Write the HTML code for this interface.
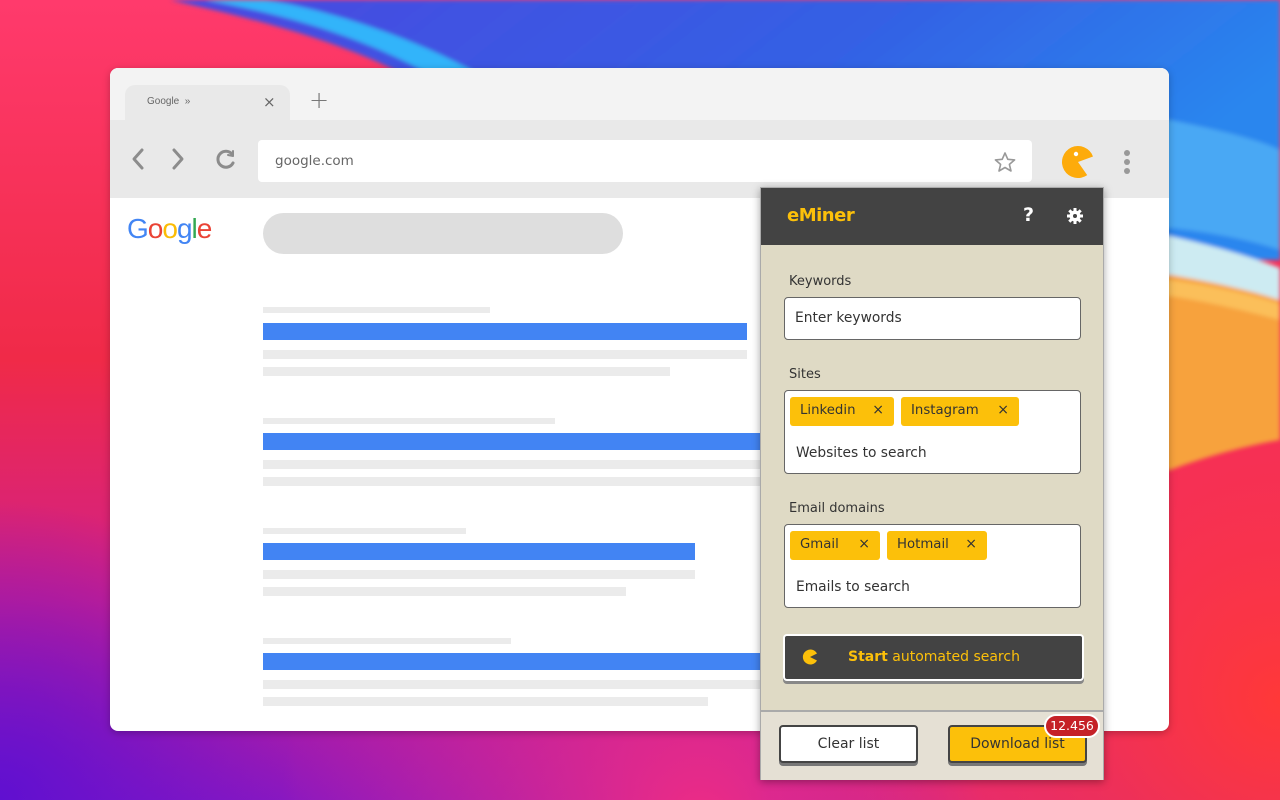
<!DOCTYPE html>
<html><head><style>
*{box-sizing:border-box;margin:0;padding:0}
body{width:1280px;height:800px;overflow:hidden;position:relative;font-family:"DejaVu Sans","Liberation Sans",sans-serif}
.bg{position:absolute;left:0;top:0}
.win{position:absolute;left:110px;top:68px;width:1059px;height:663px;border-radius:8px;background:#fff;overflow:hidden;box-shadow:0 2px 8px rgba(0,0,0,.25)}
.strip{position:absolute;left:0;top:0;width:100%;height:52px;background:#f3f3f3}
.tab{position:absolute;left:15px;top:17px;width:165px;height:36px;background:#e9e9e9;border-radius:10px 10px 0 0}
.tool{position:absolute;left:0;top:52px;width:100%;height:78px;background:#e9e9e9}
.url{position:absolute;left:148px;top:72px;width:774px;height:42px;background:#fff;border-radius:4px;font-size:13.5px;color:#666;padding:13px 17px}
.bar{position:absolute;background:#ebebeb;height:9px}
.blue{position:absolute;background:#4284f3;height:17px}
.pop{position:absolute;left:760px;top:187px;width:344px;height:593px;background:#dfdac5;border:1px solid #aaa;box-shadow:0 2px 8px rgba(0,0,0,.35)}
.hd{height:57px;background:#434343;position:relative}
.lbl{position:absolute;left:28px;font-size:13px;color:#333}
.inp{position:absolute;left:23px;width:297px;background:#fff;border:1.5px solid #666;border-radius:4px;font-size:13.8px;color:#333}
.chip{position:absolute;top:6px;height:29px;background:#fcc00a;border-radius:3px;font-size:13.3px;color:#333;padding:6px 10px}
.chip b{position:absolute;right:10px;top:5px;font-size:14px;font-weight:normal}
.ft{position:absolute;left:0;top:522px;width:100%;height:70px;background:#e5e0d4;border-top:2px solid #aaa}
.btn{position:absolute;height:38px;border:2px solid #444;border-radius:4px;font-size:14px;color:#333;text-align:center;line-height:34px;box-shadow:0 3px 0 #777}
</style></head><body>
<svg class="bg" width="1280" height="800" viewBox="0 0 1280 800">
<defs>
<linearGradient id="base" x1="0" y1="0" x2="0" y2="1">
<stop offset="0" stop-color="#ff3a6c"/><stop offset="0.45" stop-color="#f02a48"/><stop offset="0.75" stop-color="#d0208a"/><stop offset="1" stop-color="#8a18c0"/></linearGradient>
<linearGradient id="bl" x1="0" y1="0" x2="1" y2="0.3"><stop offset="0" stop-color="#4a48e0"/><stop offset="0.6" stop-color="#3460e4"/><stop offset="1" stop-color="#2a86ee"/></linearGradient>
<radialGradient id="br" cx="1280" cy="700" r="520" gradientUnits="userSpaceOnUse"><stop offset="0" stop-color="#ff3838"/><stop offset="0.6" stop-color="#f83058" stop-opacity=".8"/><stop offset="1" stop-color="#f8306a" stop-opacity="0"/></radialGradient>
<radialGradient id="bm" cx="700" cy="820" r="420" gradientUnits="userSpaceOnUse"><stop offset="0" stop-color="#ee2c84"/><stop offset="1" stop-color="#ee2c84" stop-opacity="0"/></radialGradient>
<radialGradient id="bp" cx="0" cy="800" r="300" gradientUnits="userSpaceOnUse"><stop offset="0" stop-color="#6010d0"/><stop offset="1" stop-color="#6010d0" stop-opacity="0"/></radialGradient>
<filter id="f"><feGaussianBlur stdDeviation="2"/></filter>
</defs>
<rect width="1280" height="800" fill="url(#base)"/>
<rect width="1280" height="800" fill="url(#bm)"/>
<rect width="1280" height="800" fill="url(#br)"/>
<rect width="1280" height="800" fill="url(#bp)"/>
<g filter="url(#f)">
<path d="M170,0 C260,20 360,45 430,90 L1100,90 L1100,260 L1280,260 L1280,0Z" fill="url(#bl)"/>
<path d="M205,0 C290,15 370,40 430,75 L480,75 C410,35 320,8 265,0Z" fill="#30b4fa"/>
<path d="M1100,120 L1170,120 C1220,130 1260,140 1280,150 L1280,250 C1250,240 1210,232 1170,228 L1100,228Z" fill="#4aa8f4"/>
<path d="M1100,236 L1170,236 C1215,246 1255,258 1280,268 L1280,300 C1250,292 1210,282 1170,275 L1100,275Z" fill="#cdebf2"/>
<path d="M1100,275 L1170,275 C1215,282 1255,292 1280,300 L1280,440 C1250,445 1210,455 1170,470 L1100,470Z" fill="#f7a23e"/>
<path d="M1100,280 L1170,280 C1215,286 1255,296 1280,304 L1280,320 C1250,312 1210,302 1170,296 L1100,296Z" fill="#fbbf5a"/>
</g>
</svg>
<div class="win">
 <div class="strip"></div>
 <div class="tab"><span style="position:absolute;left:22px;top:11px;font-size:10px;color:#666;font-family:'Liberation Sans',sans-serif">Google &nbsp;»</span><span style="position:absolute;left:138px;top:8px;font-size:15px;color:#666">×</span></div>
 <div style="position:absolute;left:199px;top:18px;font-size:24px;color:#777;font-weight:300">+</div>
 <div class="tool"></div>
 <svg style="position:absolute;left:16px;top:78px" width="120" height="26" viewBox="0 0 120 26" fill="none" stroke="#8c8c8c" stroke-width="3" stroke-linecap="round" stroke-linejoin="round"><path d="M16 4 L8 13 L16 22"/><path d="M48 4 L56 13 L48 22"/><path d="M106 8 A8 8 0 1 0 107 17"/><path d="M102 9 L107 10 L107 5" stroke-width="2"/></svg>
 <div class="url">google.com</div>
 <svg style="position:absolute;left:883px;top:83px" width="24" height="22" viewBox="0 0 24 22"><path d="M12 2 L14.8 8.3 L21.6 8.9 L16.4 13.4 L18 20 L12 16.5 L6 20 L7.6 13.4 L2.4 8.9 L9.2 8.3Z" fill="none" stroke="#999" stroke-width="1.6" stroke-linejoin="round"/></svg>
 <svg style="position:absolute;left:950px;top:76px" width="36" height="36" viewBox="0 0 36 36"><path d="M18 18 L33 12.5 A16 16 0 1 0 27.2 31.1 Z" fill="#fdab0b"/><circle cx="16" cy="10" r="2.2" fill="#fff"/></svg>
 <div style="position:absolute;left:1014px;top:82px;width:6px">
  <div style="width:6px;height:6px;border-radius:3px;background:#999;margin-bottom:3px"></div><div style="width:6px;height:6px;border-radius:3px;background:#999;margin-bottom:3px"></div><div style="width:6px;height:6px;border-radius:3px;background:#999"></div></div>
 <div style="position:absolute;left:17px;top:145px;font-size:28px;letter-spacing:-1px;font-family:'Liberation Sans',sans-serif"><span style="color:#4285f4">G</span><span style="color:#ea4335">o</span><span style="color:#fbbc05">o</span><span style="color:#4285f4">g</span><span style="color:#34a853">l</span><span style="color:#ea4335">e</span></div>
 <div style="position:absolute;left:153px;top:145px;width:360px;height:41px;background:#dedede;border-radius:21px"></div>
 <div class="bar" style="left:153px;top:239px;width:227px;height:6px"></div>
 <div class="blue" style="left:153px;top:255px;width:484px"></div>
 <div class="bar" style="left:153px;top:282px;width:484px"></div>
 <div class="bar" style="left:153px;top:299px;width:407px"></div>
 <div class="bar" style="left:153px;top:350px;width:292px;height:6px"></div>
 <div class="blue" style="left:153px;top:365px;width:500px"></div>
 <div class="bar" style="left:153px;top:392px;width:500px"></div>
 <div class="bar" style="left:153px;top:409px;width:500px"></div>
 <div class="bar" style="left:153px;top:460px;width:203px;height:6px"></div>
 <div class="blue" style="left:153px;top:475px;width:432px"></div>
 <div class="bar" style="left:153px;top:502px;width:432px"></div>
 <div class="bar" style="left:153px;top:519px;width:363px"></div>
 <div class="bar" style="left:153px;top:570px;width:248px;height:6px"></div>
 <div class="blue" style="left:153px;top:585px;width:500px"></div>
 <div class="bar" style="left:153px;top:612px;width:500px"></div>
 <div class="bar" style="left:153px;top:629px;width:445px"></div>
</div>
<div class="pop">
 <div class="hd">
  <span style="position:absolute;left:26px;top:17px;font-size:18px;font-weight:bold;color:#fcc00a;letter-spacing:-0.5px">eMiner</span>
  <span style="position:absolute;left:262px;top:16px;font-size:19px;font-weight:bold;color:#fff">?</span>
  <svg style="position:absolute;left:306px;top:20px" width="16" height="16" viewBox="0 0 16 16"><g stroke="#fff" stroke-width="3"><path d="M8 0V16M0 8H16M2.3 2.3L13.7 13.7M13.7 2.3L2.3 13.7"/></g><circle cx="8" cy="8" r="5.5" fill="#fff"/><circle cx="8" cy="8" r="2" fill="#434343"/></svg>
 </div>
 <div class="lbl" style="top:86px">Keywords</div>
 <div class="inp" style="top:109px;height:43px;padding:12px 10px">Enter keywords</div>
 <div class="lbl" style="top:179px">Sites</div>
 <div class="inp" style="top:202px;height:84px">
  <div class="chip" style="left:5px;width:104px">Linkedin<b>×</b></div>
  <div class="chip" style="left:116px;width:118px">Instagram<b>×</b></div>
  <span style="position:absolute;left:11px;top:54px">Websites to search</span>
 </div>
 <div class="lbl" style="top:313px">Email domains</div>
 <div class="inp" style="top:336px;height:84px">
  <div class="chip" style="left:5px;width:90px">Gmail<b>×</b></div>
  <div class="chip" style="left:102px;width:100px">Hotmail<b>×</b></div>
  <span style="position:absolute;left:11px;top:54px">Emails to search</span>
 </div>
 <div style="position:absolute;left:22px;top:446px;width:301px;height:47px;background:#434343;border:2px solid #fff;border-radius:4px;box-shadow:0 3px 0 #888;color:#fcc00a;font-size:14px;line-height:42px">
  <svg style="position:absolute;left:17px;top:13px" width="16" height="16" viewBox="0 0 16 16"><path d="M8 8 L15 4.5 A7.5 7.5 0 1 0 15 11.5Z" fill="#fcc00a"/></svg>
  <span style="position:absolute;left:63px"><b>Start</b> automated search</span>
 </div>
 <div class="ft">
  <div class="btn" style="left:18px;top:13px;width:139px;background:#fff">Clear list</div>
  <div class="btn" style="left:187px;top:13px;width:139px;background:#fcc00a">Download list</div>
  <div style="position:absolute;left:283px;top:2px;width:56px;height:24px;background:#c52127;border:2px solid #fff;border-radius:12px;color:#fff;font-size:12.5px;text-align:center;line-height:20px">12.456</div>
 </div>
</div>
</body></html>
